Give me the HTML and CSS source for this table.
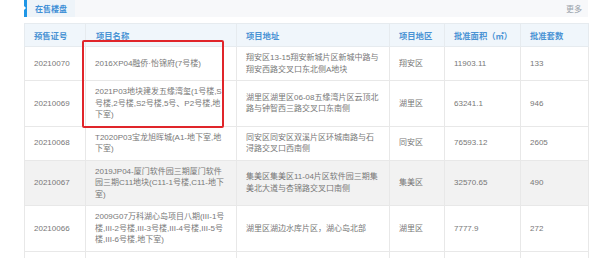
FILE: index.html
```html
<!DOCTYPE html>
<html lang="zh-CN">
<head>
<meta charset="utf-8">
<title>在售楼盘</title>
<link rel="stylesheet" href="styles.css">
</head>
<body>
<div class="panel">
  <div class="bar">
    <div class="tab"><span class="tab-mark"></span><span class="tab-text">在售楼盘</span></div>
    <a class="more">更多</a>
  </div>
  <div class="table-wrap">
    <table class="list">
      <colgroup>
        <col class="c1"><col class="c2"><col class="c3"><col class="c4"><col class="c5"><col class="c6">
      </colgroup>
      <thead>
        <tr><th>预售证号</th><th class="h2">项目名称</th><th>项目地址</th><th>项目地区</th><th>批准面积（㎡）</th><th>批准套数</th></tr>
      </thead>
      <tbody>
        <tr><td>20210070</td><td>2016XP04融侨·怡锦府(7号楼)</td><td>翔安区13-15翔安新城片区新城中路与翔安西路交叉口东北侧A地块</td><td>翔安区</td><td>11903.11</td><td>133</td></tr>
        <tr><td>20210069</td><td>2021P03地块建发五缘湾玺(1号楼,S号楼,2号楼,S2号楼,5号、P2号楼,地下室)</td><td>湖里区湖里区06-08五缘湾片区云顶北路与钟智西三路交叉口东南侧</td><td>湖里区</td><td>63241.1</td><td>946</td></tr>
        <tr><td>20210068</td><td>T2020P03宝龙旭晖城(A1-地下室,地下室)</td><td>同安区同安区双溪片区环城南路与石浔路交叉口西南侧</td><td>同安区</td><td>76593.12</td><td>2605</td></tr>
        <tr class="hover"><td>20210067</td><td>2019JP04-厦门软件园三期厦门软件园三期C11地块(C11-1号楼,C11-地下室)</td><td>集美区集美区11-04片区软件园三期集美北大道与杏锦路交叉口南侧</td><td>集美区</td><td>32570.65</td><td>490</td></tr>
        <tr><td>20210066</td><td>2009G07万科湖心岛项目八期(III-1号楼,III-2号楼,III-3号楼,III-4号楼,III-5号楼,III-6号楼,地下室)</td><td>湖里区湖边水库片区，湖心岛北部</td><td>湖里区</td><td>7777.9</td><td>272</td></tr>
        <tr class="blank"><td></td><td></td><td></td><td></td><td></td><td></td></tr>
      </tbody>
    </table>
    <div class="mark"></div>
  </div>
</div>
</body>
</html>
```
FILE: styles.css
```css
html, body {
  margin: 0;
  padding: 0;
  background: #ffffff;
}
body {
  font-family: "Liberation Sans", "Noto Sans CJK SC", sans-serif;
  font-size: 8px;
  color: #777777;
}
.panel {
  width: 564px;
  margin-left: 24px;
}
.bar {
  height: 17px;
  background: #f7f8fa;
  display: flex;
  align-items: stretch;
  justify-content: space-between;
}
.tab {
  width: 51px;
  background: #eef4f9;
  display: flex;
  align-items: center;
}
.tab-mark {
  position: relative;
  width: 3px;
  height: 17px;
  background: #1e96e6;
  flex: none;
}
.tab-mark::after {
  content: "";
  position: absolute;
  left: 0;
  top: 6px;
  border-left: 2px solid #ffffff;
  border-top: 2px solid transparent;
  border-bottom: 2px solid transparent;
}
.tab-text {
  margin-left: 8px;
  font-family: "Noto Sans CJK SC", sans-serif;
  font-size: 8px;
  font-weight: 700;
  color: #3e8fd6;
  line-height: 17px;
}
.more {
  font-family: "Noto Sans CJK SC", sans-serif;
  font-size: 8px;
  color: #9aa3ab;
  line-height: 17px;
  padding-right: 6px;
}
.table-wrap {
  position: relative;
  margin-top: 6px;
}
.list {
  width: 564px;
  table-layout: fixed;
  border-collapse: collapse;
}
.c1 { width: 61px; }
.c2 { width: 151px; }
.c3 { width: 153px; }
.c4 { width: 55px; }
.c5 { width: 76px; }
.c6 { width: 68px; }
.list th {
  height: 22px;
  padding: 0 9px;
  background: #f0f6fb;
  border: 1px solid #e6ebef;
  text-align: left;
  font-family: "Noto Sans CJK SC", sans-serif;
  font-weight: 700;
  font-size: 8.3px;
  color: #4a93d4;
}
.list th.h2 { padding-left: 10px; }
.list td {
  padding: 5px 8px 5px 9px;
  border: 1px solid #e8e8e8;
  line-height: 11.5px;
  vertical-align: middle;
  word-break: break-all;
}
.list tr.hover td {
  background: #f2f2f2;
}
.list tr.blank td {
  height: 24px;
}
.mark {
  position: absolute;
  left: 58px;
  top: 17px;
  width: 138px;
  height: 84px;
  border: 2px solid #e0252a;
  border-radius: 2px;
}
```
